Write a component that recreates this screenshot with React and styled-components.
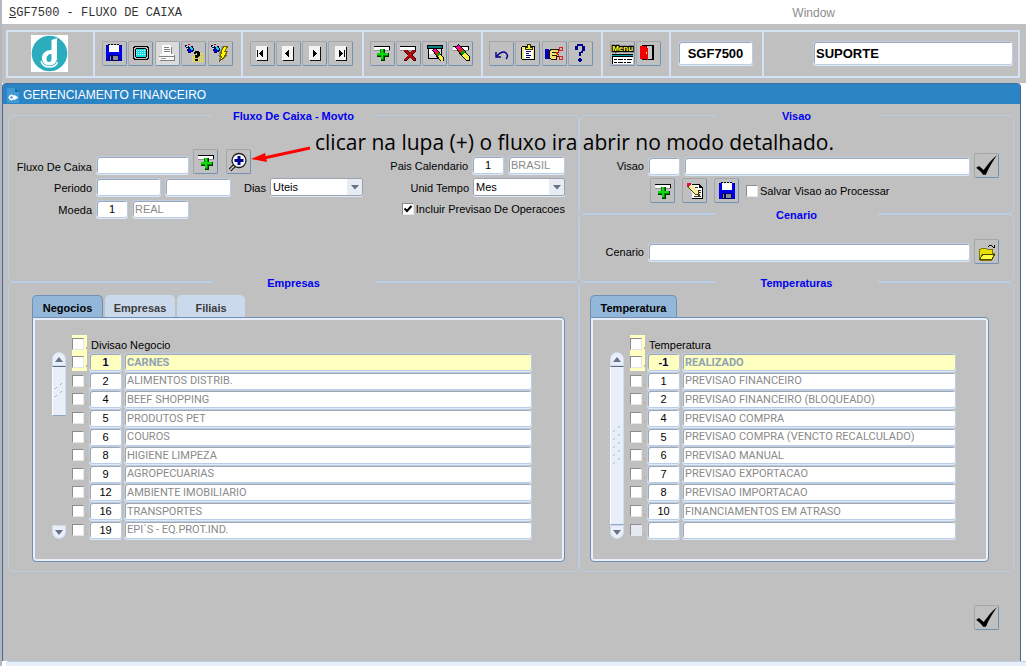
import React, { useState } from 'react';
import styled, { createGlobalStyle, css } from 'styled-components';

const GlobalStyle = createGlobalStyle`
  * {
    box-sizing: border-box;
  }
  body {
    margin: 0;
    background: #ffffff;
    color: #000000;
    font-family: 'Liberation Sans', Arial, sans-serif;
    font-size: 11px;
    line-height: 14px;
  }
  button, input, select {
    font: inherit;
    color: inherit;
    margin: 0;
  }
`;

const Page = styled.div`
  display: flex;
  flex-direction: column;
  min-height: 100vh;
  border-left: 2px solid #b4b8be;
`;

/* ---------- menu and toolbar ---------- */

const MenuBar = styled.nav`
  display: flex;
  justify-content: space-between;
  align-items: center;
  height: 24px;
  padding: 1px 191px 0 7px;
  background: #ffffff;
`;

const MenuItem = styled.button`
  padding: 0;
  border: 0;
  background: none;
  font-size: 12px;
  color: #8c8c8c;

  ${(props) =>
    props.$mono &&
    css`
      color: #333333;
      font-family: 'Liberation Mono', 'Courier New', monospace;
    `}
`;

const ToolbarArea = styled.header`
  padding: 6px 6px 5px 4px;
  background: #c0c0c0;
`;

const Toolbar = styled.div`
  display: flex;
  height: 48px;
  border: 2px solid #d3e1f4;
`;

const Section = styled.div`
  display: flex;
  flex: none;
  align-items: center;
  justify-content: center;
  width: ${(props) => props.$width}px;
  padding: 0 2px 2px 0;
  border-right: 2px solid #d3e1f4;
`;

const LastSection = styled.div`
  display: flex;
  flex: 1;
  align-items: center;
  justify-content: flex-end;
  padding: 0 5px 2px 0;
`;

const ButtonGroup = styled.div`
  display: flex;
  justify-content: space-between;
  width: ${(props) => props.$width}px;
`;

const IconButton = styled.button`
  display: flex;
  flex: none;
  align-items: center;
  justify-content: center;
  width: 25px;
  height: 25px;
  padding: 0;
  border: 1px solid;
  border-color: #a4a6aa #7090b4 #7090b4 #a4a6aa;
  border-radius: 2px;
  background: ${(props) => (props.$off ? '#dadada' : '#c0c0c0')};
`;

const Field = styled.input`
  flex: ${(props) => (props.$width ? 'none' : '1')};
  width: ${(props) => (props.$width ? props.$width + 'px' : '100%')};
  min-width: 0;
  height: 18px;
  padding: 0 2px;
  border: 1px solid #b9cde6;
  border-radius: 3px;
  outline: 0;
  background: #ffffff;
  box-shadow: inset 1px 1px 0 #a2a6ae, 0 1px 0 #dfe8f5;
  text-align: ${(props) => (props.$center ? 'center' : 'left')};
  color: ${(props) => (props.$muted ? '#8a8a8a' : '#000000')};

  ${(props) =>
    props.$big &&
    css`
      height: 24px;
      font-size: 13px;
      font-weight: bold;
    `}
`;

/* ---------- window ---------- */

const Window = styled.main`
  display: flex;
  flex: 1;
  flex-direction: column;
  margin-right: 5px;
  border-left: 1px solid #44689a;
  border-right: 1px solid #44689a;
  border-radius: 4px 4px 0 0;
  background: #c0c0c0;
`;

const TitleBar = styled.h1`
  display: flex;
  align-items: center;
  gap: 4px;
  height: 21px;
  margin: 0;
  padding: 1px 4px 0;
  border-top: 1px solid #3f6ba0;
  border-radius: 4px 4px 0 0;
  background: #2b84c4;
  color: #ffffff;
  font-size: 12px;
  font-weight: normal;
`;

const Content = styled.div`
  position: relative;
  flex: 1;
  padding: 11px 6px 0 5px;
`;

const Columns = styled.div`
  display: grid;
  grid-template-columns: 571fr 435fr;
`;

const Column = styled.div`
  display: flex;
  flex-direction: column;
`;

const Group = styled.fieldset`
  flex: ${(props) => (props.$height ? 'none' : '1')};
  min-width: 0;
  height: ${(props) => (props.$height ? props.$height + 'px' : 'auto')};
  margin: -8px 0 0;
  padding: 0;
  border: 1px solid #b9cde6;
  border-radius: 5px;
`;

const Legend = styled.legend`
  width: 162px;
  height: 16px;
  margin: 0 auto;
  padding: 2px 0 0;
  background: #c0c0c0;
  color: #0000f0;
  font-weight: bold;
  text-align: center;
`;

const Rows = styled.div`
  display: flex;
  flex-direction: column;
  gap: ${(props) => props.$gap || 0}px;
  padding: ${(props) => props.$pad};
`;

const Row = styled.div`
  display: flex;
  align-items: ${(props) => props.$align || 'center'};
  justify-content: space-between;
`;

const Cluster = styled.div`
  display: flex;
  flex: ${(props) => (props.$grow ? '1' : 'none')};
  align-items: ${(props) => props.$align || 'center'};
  gap: ${(props) => props.$gap || 4}px;
`;

const Label = styled.label`
  flex: none;
  width: ${(props) => (props.$width ? props.$width + 'px' : 'auto')};
  padding: 1px 0 0;
  text-align: right;
  white-space: nowrap;
`;

const Indent = styled.div`
  display: flex;
  align-items: center;
  gap: 7px;
  padding-left: 70px;
`;

const Check = styled.input`
  flex: none;
  appearance: none;
  display: block;
  width: 12px;
  height: 12px;
  border: 1px solid;
  border-color: #8c8c8c #e6e6e6 #e6e6e6 #8c8c8c;
  background: ${(props) => (props.disabled ? '#e4e9f2' : '#ffffff')};

  &:checked {
    background: #ffffff
      url("data:image/svg+xml,%3Csvg xmlns='http://www.w3.org/2000/svg' viewBox='0 0 10 10'%3E%3Cpath d='M1.5 4.5l2.5 2.5l4.5-5' fill='none' stroke='%23000' stroke-width='2'/%3E%3C/svg%3E");
  }
`;

const CheckLabel = styled.label`
  display: flex;
  align-items: center;
  gap: 2px;
  white-space: nowrap;
`;

const SelectBox = styled.select`
  appearance: none;
  width: ${(props) => props.$width}px;
  height: 18px;
  padding: 0 16px 0 2px;
  border: 1px solid #9aa3b2;
  border-radius: 2px;
  outline: 0;
  background: #ffffff
    url("data:image/svg+xml,%3Csvg xmlns='http://www.w3.org/2000/svg' viewBox='0 0 15 16'%3E%3Cpath d='M0 0h15v16H0z' fill='%23e6ebf4'/%3E%3Cpath d='M4 6h8l-4 4.5z' fill='%23697086'/%3E%3C/svg%3E")
    right center / 15px 16px no-repeat;
  box-shadow: 0 1px 0 #dfe8f5;
`;

/* ---------- tabs and lists ---------- */

const TabArea = styled.div`
  padding: ${(props) => props.$pad};
`;

const Tabs = styled.div`
  display: flex;
  gap: 2px;
  height: 22px;
`;

const Tab = styled.button`
  width: ${(props) => props.$width}px;
  padding: 2px 0 0;
  border: 1px solid #cbd9ec;
  border-bottom: 0;
  border-radius: 5px 5px 0 0;
  background: #cbd9ec;
  color: #3c3c3c;
  font-weight: bold;

  ${(props) =>
    props.$active &&
    css`
      border-color: #6f90b4;
      background: #93b7d9;
      color: #000000;
    `}
`;

const Panel = styled.div`
  display: flex;
  gap: 6px;
  padding: 17px 32px 22px 19px;
  border: 1px solid #6f90b4;
  border-radius: 0 4px 4px 4px;
  box-shadow: inset 0 0 0 2px #e9eff8;
`;

const Scroll = styled.div`
  display: flex;
  flex: none;
  flex-direction: column;
  justify-content: space-between;
  width: 14px;
  margin-top: 17px;
`;

const ScrollButton = styled.button`
  display: flex;
  flex: none;
  align-items: center;
  justify-content: center;
  height: 14px;
  padding: 0;
  border: 1px solid #cfdcee;
  border-radius: ${(props) => (props.$down ? '0 0 7px 7px' : '7px 7px 0 0')};
  background: #e9eff8;
`;

const Thumb = styled.div`
  display: flex;
  align-items: center;
  justify-content: center;
  flex: ${(props) => (props.$full ? '1' : 'none')};
  height: 50px;
  margin-bottom: ${(props) => (props.$full ? 0 : 'auto')};
  border: 1px solid;
  border-color: #5f6b86 #cfdcee #8fa4c0 #ffffff;
  background: #e9eff8;
`;

const List = styled.table`
  width: 100%;
  border-collapse: collapse;
  table-layout: fixed;

  th,
  td {
    padding: 0;
  }
  th {
    height: 18px;
    padding: 2px 0 0 2px;
    font-weight: normal;
    text-align: left;
  }
  tbody {
    height: 186px;
  }
`;

const TickHead = styled.td`
  height: 18px;
  vertical-align: middle;
`;

const Tick = styled.div`
  display: flex;
  align-items: center;
  width: 15px;
  height: 18px;
  background: ${(props) => (props.$lit ? '#ffffc0' : 'none')};

  /* stub of the hidden caption beside every tick box */
  &::after {
    content: '';
    width: 1px;
    height: 2px;
    margin: 8px 0 0 2px;
    background: #d0a860;
  }
`;

const Cell = styled(Field)`
  display: block;
  padding: 0 2px;
  font-family: ${(props) => (props.$muted ? "Roboto, 'Liberation Sans', sans-serif" : 'inherit')};

  ${(props) =>
    props.$current &&
    css`
      background: #ffffc0;
      color: ${props.$muted ? '#8da3b4' : '#000040'};
      font-weight: bold;
    `}
`;

const Footer = styled.div`
  display: flex;
  justify-content: flex-end;
  padding: 33px 15px 30px 0;
`;

const StatusBar = styled.footer`
  height: 5px;
  margin-left: 4px;
  border-top: 1px solid #b9cde6;
  border-radius: 4px 0 0 0;
  background: #e9eff8;
`;

/* the note is drawn over the form */
const Note = styled.p`
  position: absolute;
  top: 24px;
  left: 312px;
  margin: 0;
  font-family: 'Open Sans', Calibri, sans-serif;
  font-size: 21px;
  line-height: 28px;
  white-space: nowrap;
  pointer-events: none;
`;

const Arrow = styled.svg`
  position: absolute;
  top: 40px;
  left: 247px;
  pointer-events: none;
`;

/* ---------- icons ---------- */

const Icon = ({ children, size = 20, smooth }) => (
  <svg
    width={size}
    height={size}
    viewBox="0 0 20 20"
    shapeRendering={smooth ? 'auto' : 'crispEdges'}
    aria-hidden="true"
  >
    {children}
  </svg>
);

const SaveIcon = () => (
  <Icon>
    <path d="M2 2h16v16H3l-1-1z" fill="#0000f0" />
    <path d="M5 2h10v7H5z" fill="#ffffff" />
    <path d="M4 1.500h12" stroke="#000" strokeDasharray="2 1" />
    <path d="M2 2h1v2H2zM17 2h1v2h-1zM2 16h1v2H2zM17 16h1v2h-1z" fill="#000050" />
    <path d="M5 12h10v6H5z" fill="#000060" />
    <path d="M6 13h8v4H6z" fill="#8c8c90" />
    <path d="M7 13h2v4H7z" fill="#000060" />
  </Icon>
);

const ScreenIcon = () => (
  <Icon>
    <path d="M3 3h14v1h1v12h-1v1H3v-1H2V4h1z" fill="#000" />
    <path d="M4 4h12v1h1v10h-1v1H4v-1H3V5h1z" fill="#c0c0c0" />
    <path d="M5 5h10v1h1v8h-1v1H5v-1H4V6h1z" fill="#000" />
    <path d="M5 6h10v8H5z" fill="#10dfe8" />
    <path d="M5 7.500h10M5 9.500h10M5 11.500h10" stroke="#d0ffff" strokeDasharray="1 1" />
  </Icon>
);

const PrintIcon = () => (
  <Icon>
    <path d="M5 2h9v2h1v7H5z" fill="#ffffff" />
    <path d="M7 4.500h5M7 6.500h6M7 8.500h6M14.500 4v7" stroke="#808080" />
    <path d="M3 11h14v2h1v4H2v-4h1z" fill="#f8f8f8" />
    <path d="M2 13.500h16M3 17.500h15M17.500 12v5" stroke="#808080" fill="none" />
    <path d="M4 15h5v1H4z" fill="#a0a0a0" />
  </Icon>
);

const Torch = () => (
  <>
    <path d="M1 2h2v1h2v1h2V3h2v2h1v3H9v1H7v1H4V8H3V5H2V4H1z" fill="#000040" />
    <path d="M2 3h2v1H2zM3 5h1v1H3z" fill="#b0f0ff" />
    <path d="M6 4h2v1h1v2H7V6H6z" fill="#00e0e8" />
    <path d="M4 6h2v1h2v2H5V8H4z" fill="#0000f0" />
    <path d="M4 1h2v1H4z" fill="#d01010" />
  </>
);

const QueryIcon = () => (
  <Icon>
    <path d="M8.500 13v6M10.500 13v6M12.500 11v8M14.500 10v9M16.500 10v9M18.500 10v9" stroke="#f4ec00" />
    <path d="M8 12.500h11M8 15.500h11" stroke="#d8d060" strokeDasharray="1 1" />
    <Torch />
    <path d="M10 11V9h1V8h4v1h1v4h-1v1h-1v1h-3v-3h2v-2h-1v1zM11 16h3v2h-3z" fill="#000" />
  </Icon>
);

const RunIcon = () => (
  <Icon>
    <Torch />
    <path d="M12 3h3l-3 6h3l-6 9 1-5H8z" fill="#8c8c8c" />
    <path d="M14 3h4l-3 5h3l-3 4h2l-8 7 3-6h-2l2-4h-1z" fill="#ffff00" stroke="#706400" />
  </Icon>
);

const NavIcon = ({ back, edge }) => (
  <Icon>
    <path d="M5 4h11v14H5z" fill="#101010" />
    <path d="M4 3h11v14H4z" fill="#f4f4f4" />
    <g transform={back ? 'matrix(-1 0 0 1 19 0)' : undefined}>
      <path d="M8 7h1v1h1v1h1v1h1v1h-1v1h-1v1H9v1H8z" fill="#000" />
      {edge && <path d="M13 7h1v7h-1z" fill="#000" />}
    </g>
  </Icon>
);

const Slip = () => (
  <>
    <path d="M2 3h16v5H2z" fill="#000" />
    <path d="M2 4h15v3H2z" fill="#ffffff" />
    <path d="M2 7h16v1H2z" fill="#909090" />
  </>
);

const InsertIcon = () => (
  <Icon>
    <Slip />
    <path d="M9 6h4v4h4v4h-4v4H9v-4H5v-4h4z" fill="#003000" />
    <path d="M8 6h4v4h4v3h-4v4H9v-4H5v-3h3z" fill="#008800" />
    <path d="M9 6h2v4h5v2h-5v4H9v-4H5v-2h4z" fill="#10d810" />
  </Icon>
);

const RemoveIcon = () => (
  <Icon>
    <Slip />
    <path d="M6 7h3l3 3 3-3h3v2l-4 3 4 4v2h-3l-3-4-3 4H6v-2l4-4-4-3z" fill="#500000" />
    <path d="M6 7h2l3 3 3-3h3v1l-4 4 4 4v1h-3l-3-3-3 3H6v-1l4-4-4-4z" fill="#a80c0c" />
  </Icon>
);

const Pencil = () => (
  <>
    <path d="M4 4l3-3 4 3 8 10v4h-4l-5-5z" fill="#000" />
    <path d="M5 4l2-2 3 2-3 3z" fill="#ff00a0" />
    <path d="M7 7l3-3 2 3-3 3z" fill="#e02020" />
    <path d="M9 10l3-3 2 2-3 3z" fill="#00a000" />
    <path d="M11 12l3-3 4 5v3h-3z" fill="#f8f040" />
  </>
);

const ClearFormIcon = () => (
  <Icon>
    <path d="M2 2h16v4h-1v10H3V6H2z" fill="#000" />
    <path d="M3 3h14v2H3z" fill="#008080" />
    <path d="M4 6h12v9H4z" fill="#d8d8d8" />
    <path d="M4 6h4v5H4z" fill="#fff" />
    <g transform="translate(4 4) scale(0.8)">
      <Pencil />
    </g>
  </Icon>
);

const ClearRecordIcon = () => (
  <Icon>
    <Slip />
    <Pencil />
  </Icon>
);

const UndoIcon = () => (
  <Icon smooth>
    <path d="M4 9v5h5M5 13c3-4 7-5 9-3c2 2 2 4 0 6" fill="none" stroke="#000090" strokeWidth="1.400" />
  </Icon>
);

const ClipboardIcon = () => (
  <Icon>
    <path d="M4 3h12l1 1v13H4l-1-1V4z" fill="#000" />
    <path d="M4 4h12v12H4z" fill="#f0e880" />
    <path d="M6 6h9v10H6z" fill="#fff" />
    <path d="M7 4h2V1h3v3h2v2H7z" fill="#f8f040" stroke="#303000" />
    <path d="M8 8.500h5M8 10.500h3M8 12.500h5M8 14.500h4" stroke="#000080" />
  </Icon>
);

const CutIcon = () => (
  <Icon>
    <path d="M1 6h4v10H1z" fill="#0000c0" />
    <path d="M5 8l3-2h6v3h-1v2h1v2h-2v3H7l-2-1z" fill="#f0e070" stroke="#201800" />
    <path d="M8 9h6M8 12h5" stroke="#201800" />
    <path d="M12 11l4-4M12 9l4 5M15 4h3v3h-3zM15 13h3v3h-3z" fill="none" stroke="#e02020" />
  </Icon>
);

const HelpIcon = () => (
  <Icon>
    <path d="M5 7V3h2V1h6v2h2v5h-2v2h-2v3H9V9h2V8h1V3H8v4zM9 15h2v1h1v2h-1v1H9v-1H8v-2h1z" fill="#000090" />
  </Icon>
);

const MenuIcon = () => (
  <Icon size={23}>
    <path d="M1 10h18v9H1z" fill="#000" />
    <path d="M1 11h18v1H1z" fill="#00a0a0" />
    <path d="M2 13h17v6H2z" fill="#fff" />
    <path d="M3 15.500h2M3 17.500h2M6 15.500h4M6 17.500h4M11 15.500h2M14 15.500h4M11 17.500h2M14 17.500h3" stroke="#000" />
    <text
      x="1"
      y="8"
      fontFamily="Liberation Sans, Arial, sans-serif"
      fontSize="7"
      fontWeight="bold"
      fill="#ffff20"
      stroke="#000"
      strokeWidth="2"
      paintOrder="stroke"
    >
      Menu
    </text>
  </Icon>
);

const ExitIcon = () => (
  <Icon>
    <path d="M4 2h12v15H4z" fill="#000" />
    <path d="M9 3h5v13H9z" fill="#c8c8c8" />
    <path d="M2 3h5l3 2v12l-3-1H2z" fill="#f00000" />
    <path d="M8 9h1v2H8z" fill="#ffff00" />
  </Icon>
);

const ZoomIcon = () => (
  <Icon smooth>
    <path d="M7 12l-6 6" stroke="#000" strokeWidth="3.600" />
    <path d="M7 12l-6 6" stroke="#d8d8d8" strokeWidth="1.600" />
    <circle cx="10" cy="8.500" r="7" fill="#f4f8ff" stroke="#202020" strokeWidth="1.300" />
    <path d="M8.500 4h3v3h3v3h-3v3h-3v-3h-3v-3h3z" fill="#000090" />
  </Icon>
);

const EditIcon = () => (
  <Icon>
    <path d="M6 3h8l4 4v11H7z" fill="#000" />
    <path d="M6 4h8v3h3v10H7z" fill="#fff" />
    <path d="M10 6.500h3M12 9.500h4M12 11.500h4M9 15.500h7" stroke="#303030" />
    <path d="M2 5l3-3 9 8 1 5-5-1z" fill="#504000" />
    <path d="M2 2h3v3H2z" fill="#ff0060" />
    <path d="M3 6l3-3 7 7v3h-3z" fill="#f8f0a0" />
  </Icon>
);

const FolderIcon = () => (
  <Icon>
    <path d="M2 7h2l1-1h4l1 1h5v4h3l-3 7H3l-1-1z" fill="#e8e000" stroke="#807800" />
    <path d="M3 17l3-5h12l-3 5z" fill="#ffff40" stroke="#504800" />
    <path d="M11 4.500h1M12 3.500h3M15 4.500h1M16 5.500h2M17.500 3v3" fill="none" stroke="#000" />
  </Icon>
);

const CheckIcon = () => (
  <Icon size={23} smooth>
    <path d="M1 12l2.500-1.500 4 3.500C11 9 15 4 19 1C16 6 12 11 9.500 18H7C5.500 15.500 3.500 14 1 12z" fill="#000" />
  </Icon>
);

const Logo = () => (
  <svg width="37" height="37" viewBox="0 0 37 37" aria-label="d">
    <path d="M0 0h37v37H0z" fill="#ffffff" />
    <circle cx="18.500" cy="18.500" r="17.800" fill="#2badbd" />
    <path
      d="M20.500 5l5.500-2v20c0 4.500-3 7.500-7.500 7.500s-7.500-3-7.500-7.500c0-5 4-8 9.500-8z"
      fill="#ffffff"
    />
    <path d="M20.500 19v5c0 2-1 3-2.500 3s-2.500-1-2.500-3c0-3 2-5 5-5z" fill="#2badbd" />
    <path d="M10 26c1 4 4.500 6 8.500 6c4 0 7-2 8-5" fill="none" stroke="#ffffff" strokeWidth="1.500" />
  </svg>
);

const FormIcon = () => (
  <svg width="12" height="16" viewBox="0 0 12 16" aria-hidden="true">
    <path d="M0 1h8l4 4v11H0z" fill="#3f9ad6" />
    <path d="M8 1v4h4z" fill="#1c6aa6" />
    <circle cx="4.500" cy="10.500" r="2" fill="none" stroke="#fff" strokeWidth="1.500" />
    <path d="M1 10.500h1M4.500 7v1M4.500 13v1M7 8l4 2.500-4 2.500z" fill="#fff" stroke="#fff" strokeWidth="0.500" />
  </svg>
);

const Triangle = ({ down }) => (
  <svg width="8" height="5" viewBox="0 0 8 5" aria-hidden="true">
    <path d={down ? 'M0 0h8L4 5z' : 'M0 5h8L4 0z'} fill="#697086" />
  </svg>
);

const Grip = ({ rows }) => (
  <svg width="8" height={rows * 8} viewBox={`0 0 8 ${rows * 8}`} aria-hidden="true">
    {Array.from({ length: rows }, (_, i) => (
      <path key={i} d={`M0 ${i * 8 + 6}l2-2M5 ${i * 8 + 2}l2-2`} stroke="#9db4cc" />
    ))}
  </svg>
);

/* ---------- data ---------- */

const TOOLS = [
  {
    width: 148,
    inner: 131,
    items: [
      ['Salvar', <SaveIcon />],
      ['Tela', <ScreenIcon />],
      ['Imprimir', <PrintIcon />, true],
      ['Consultar', <QueryIcon />],
      ['Executar', <RunIcon />],
    ],
  },
  {
    width: 121,
    inner: 104,
    items: [
      ['Primeiro', <NavIcon back edge />],
      ['Anterior', <NavIcon back />],
      ['Proximo', <NavIcon />],
      ['Ultimo', <NavIcon edge />],
    ],
  },
  {
    width: 119,
    inner: 104,
    items: [
      ['Inserir', <InsertIcon />],
      ['Excluir', <RemoveIcon />],
      ['Limpar tela', <ClearFormIcon />],
      ['Limpar registro', <ClearRecordIcon />],
    ],
  },
  {
    width: 120,
    inner: 104,
    items: [
      ['Desfazer', <UndoIcon />],
      ['Lista', <ClipboardIcon />],
      ['Recortar', <CutIcon />],
      ['Ajuda', <HelpIcon />],
    ],
  },
  {
    width: 68,
    inner: 51,
    items: [
      ['Menu', <MenuIcon />],
      ['Sair', <ExitIcon />],
    ],
  },
];

const NEGOCIOS = [
  ['1', 'CARNES'],
  ['2', 'ALIMENTOS DISTRIB.'],
  ['4', 'BEEF SHOPPING'],
  ['5', 'PRODUTOS PET'],
  ['6', 'COUROS'],
  ['8', 'HIGIENE LIMPEZA'],
  ['9', 'AGROPECUARIAS'],
  ['12', 'AMBIENTE IMOBILIARIO'],
  ['16', 'TRANSPORTES'],
  ['19', 'EPI´S - EQ.PROT.IND.'],
];

const TEMPERATURAS = [
  ['-1', 'REALIZADO'],
  ['1', 'PREVISAO FINANCEIRO'],
  ['2', 'PREVISAO FINANCEIRO (BLOQUEADO)'],
  ['4', 'PREVISAO COMPRA'],
  ['5', 'PREVISAO COMPRA (VENCTO RECALCULADO)'],
  ['6', 'PREVISAO MANUAL'],
  ['7', 'PREVISAO EXPORTACAO'],
  ['8', 'PREVISAO IMPORTACAO'],
  ['10', 'FINANCIAMENTOS EM ATRASO'],
  ['', ''],
];

const ListPanel = ({ title, rows, full }) => (
  <Panel>
    <Scroll>
      <ScrollButton aria-label="Subir">
        <Triangle />
      </ScrollButton>
      <Thumb $full={full}>
        <Grip rows={full ? 5 : 2} />
      </Thumb>
      <ScrollButton $down aria-label="Descer">
        <Triangle down />
      </ScrollButton>
    </Scroll>
    <List>
      <colgroup>
        <col width="17" />
        <col width="35" />
        <col />
      </colgroup>
      <thead>
        <tr>
          <TickHead>
            <Tick $lit>
              <Check type="checkbox" aria-label={`Marcar todos: ${title}`} />
            </Tick>
          </TickHead>
          <th colSpan={2}>{title}</th>
        </tr>
      </thead>
      <tbody>
        {rows.map(([code, name], i) => (
          <tr key={i}>
            <td>
              <Tick $lit={i === 0}>
                <Check type="checkbox" disabled={!name} aria-label={name || 'Vazio'} />
              </Tick>
            </td>
            <td>
              <Cell $width={33} $center $current={i === 0} readOnly value={code} aria-label="Codigo" />
            </td>
            <td>
              <Cell $muted $current={i === 0} readOnly value={name} aria-label={title} />
            </td>
          </tr>
        ))}
      </tbody>
    </List>
  </Panel>
);

const App = () => {
  const [tab, setTab] = useState('Negocios');

  return (
    <>
      <GlobalStyle />
      <Page>
        <MenuBar>
          <MenuItem $mono>
            <u>S</u>GF7500 - FLUXO DE CAIXA
          </MenuItem>
          <MenuItem>Window</MenuItem>
        </MenuBar>

        <ToolbarArea>
          <Toolbar>
            <Section $width={87}>
              <Logo />
            </Section>
            {TOOLS.map((group, i) => (
              <Section key={i} $width={group.width}>
                <ButtonGroup $width={group.inner}>
                  {group.items.map(([name, icon, off]) => (
                    <IconButton key={name} aria-label={name} $off={off}>
                      {icon}
                    </IconButton>
                  ))}
                </ButtonGroup>
              </Section>
            ))}
            <Section $width={93}>
              <Field $big $center $width={75} defaultValue="SGF7500" aria-label="Programa" />
            </Section>
            <LastSection>
              <Field $big $width={200} defaultValue="SUPORTE" aria-label="Usuario" />
            </LastSection>
          </Toolbar>
        </ToolbarArea>

        <Window>
          <TitleBar>
            <FormIcon />
            GERENCIAMENTO FINANCEIRO
          </TitleBar>
          <Content>
            <Columns>
              <Column>
                <Group $height={175}>
                  <Legend>Fluxo De Caixa - Movto</Legend>
                  <Rows $gap={4} $pad="26px 13px 0 0">
                    <Row $align="flex-end">
                      <Cluster $align="flex-end">
                        <Label htmlFor="fluxo" $width={83}>Fluxo De Caixa</Label>
                        <Field id="fluxo" $width={93} />
                        <Cluster $gap={8}>
                          <IconButton aria-label="Novo fluxo">
                            <InsertIcon />
                          </IconButton>
                          <IconButton aria-label="Detalhar">
                            <ZoomIcon />
                          </IconButton>
                        </Cluster>
                      </Cluster>
                      <Cluster>
                        <Label htmlFor="pais">Pais Calendario</Label>
                        <Field id="pais" $width={32} $center defaultValue="1" />
                        <Field $width={57} $muted readOnly value="BRASIL" aria-label="Pais" />
                      </Cluster>
                    </Row>
                    <Row>
                      <Cluster>
                        <Label htmlFor="periodo" $width={83}>Periodo</Label>
                        <Field id="periodo" $width={65} />
                        <Field $width={66} aria-label="Periodo final" />
                        <Label htmlFor="dias" $width={31}>Dias</Label>
                        <SelectBox id="dias" $width={93}>
                          <option>Uteis</option>
                        </SelectBox>
                      </Cluster>
                      <Cluster>
                        <Label htmlFor="unid">Unid Tempo</Label>
                        <SelectBox id="unid" $width={92}>
                          <option>Mes</option>
                        </SelectBox>
                      </Cluster>
                    </Row>
                    <Row>
                      <Cluster>
                        <Label htmlFor="moeda" $width={83}>Moeda</Label>
                        <Field id="moeda" $width={32} $center defaultValue="1" />
                        <Field $width={57} $muted readOnly value="REAL" aria-label="Nome da moeda" />
                      </Cluster>
                      <CheckLabel>
                        <Check type="checkbox" defaultChecked />
                        Incluir Previsao De Operacoes
                      </CheckLabel>
                    </Row>
                  </Rows>
                </Group>

                <Group>
                  <Legend>Empresas</Legend>
                  <TabArea $pad="5px 13px 9px 23px">
                    <Tabs>
                      <Tab $width={71} $active={tab === 'Negocios'} onClick={() => setTab('Negocios')}>
                        Negocios
                      </Tab>
                      <Tab $width={70} $active={tab === 'Empresas'} onClick={() => setTab('Empresas')}>
                        Empresas
                      </Tab>
                      <Tab $width={68} $active={tab === 'Filiais'} onClick={() => setTab('Filiais')}>
                        Filiais
                      </Tab>
                    </Tabs>
                    <ListPanel title="Divisao Negocio" rows={NEGOCIOS} />
                  </TabArea>
                </Group>
              </Column>

              <Column>
                <Group $height={107}>
                  <Legend>Visao</Legend>
                  <Rows $pad="30px 14px 0 0">
                    <Row>
                      <Cluster $grow>
                        <Label htmlFor="visao" $width={64}>Visao</Label>
                        <Field id="visao" $width={32} />
                        <Field aria-label="Nome da visao" />
                        <IconButton aria-label="Confirmar visao">
                          <CheckIcon />
                        </IconButton>
                      </Cluster>
                    </Row>
                    <Indent>
                      <IconButton aria-label="Nova visao">
                        <InsertIcon />
                      </IconButton>
                      <IconButton aria-label="Editar visao">
                        <EditIcon />
                      </IconButton>
                      <IconButton aria-label="Salvar visao">
                        <SaveIcon />
                      </IconButton>
                      <CheckLabel>
                        <Check type="checkbox" />
                        Salvar Visao ao Processar
                      </CheckLabel>
                    </Indent>
                  </Rows>
                </Group>

                <Group $height={76}>
                  <Legend>Cenario</Legend>
                  <Rows $pad="17px 14px 0 0">
                    <Row>
                      <Cluster $grow>
                        <Label htmlFor="cenario" $width={64}>Cenario</Label>
                        <Field id="cenario" />
                        <IconButton aria-label="Abrir cenario">
                          <FolderIcon />
                        </IconButton>
                      </Cluster>
                    </Row>
                  </Rows>
                </Group>

                <Group>
                  <Legend>Temperaturas</Legend>
                  <TabArea $pad="5px 24px 9px 10px">
                    <Tabs>
                      <Tab $width={87} $active>
                        Temperatura
                      </Tab>
                    </Tabs>
                    <ListPanel title="Temperatura" rows={TEMPERATURAS} full />
                  </TabArea>
                </Group>
              </Column>
            </Columns>

            <Footer>
              <IconButton aria-label="Processar">
                <CheckIcon />
              </IconButton>
            </Footer>

            <Arrow width="66" height="24" viewBox="0 0 66 24" aria-hidden="true">
              <path d="M60 4L14 14" stroke="#ff0000" strokeWidth="3" />
              <path d="M1 15L15 9L17 18z" fill="#ff0000" />
            </Arrow>
            <Note>clicar na lupa (+) o fluxo ira abrir no modo detalhado.</Note>
          </Content>
        </Window>
        <StatusBar />
      </Page>
    </>
  );
};

export default App;
